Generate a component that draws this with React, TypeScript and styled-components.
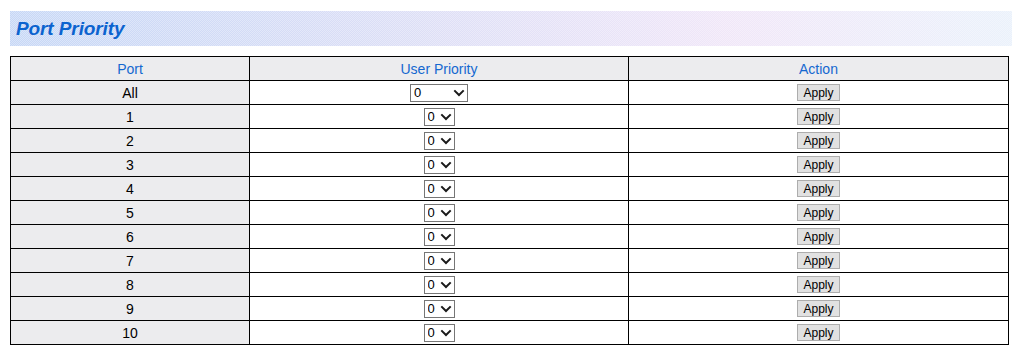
import styled, { createGlobalStyle } from "styled-components";

const GlobalStyle = createGlobalStyle`
    body{
        margin:0;
        background:#ffffff;
        font-family:"Liberation Sans", Arial, sans-serif;
    }
`;

const Page = styled.div`
    padding:11px 7px 0 10px;
`;

const TitleBar = styled.div`
    height:35px;
    display:flex;
    align-items:center;
    padding-left:6px;
    background:
        repeating-conic-gradient(rgba(255,255,255,0.35) 0 25%, rgba(255,255,255,0) 0 50%) 0 0/2px 2px,
        linear-gradient(90deg,#c6d7f6 0%,#dcdef6 40%,#f0e6f8 72%,#eaf1fb 100%);
`;

const Title = styled.h1`
    margin:0;
    font-size:19px;
    font-weight:bold;
    font-style:italic;
    color:#0b63cf;
    letter-spacing:-0.1px;
`;

const Table = styled.table`
    margin-top:10px;
    width:998px;
    border-collapse:collapse;
    table-layout:fixed;
    font-size:14px;
`;

const dither = `
    background:
        repeating-conic-gradient(#e3e3e5 0 25%, #f5f4f6 0 50%) 0 0/2px 2px;
`;

const Head = styled.th`
    ${dither}
    height:23px;
    border:1px solid #000;
    font-weight:normal;
    color:#1468d0;
    text-align:center;
    padding:0;
`;

const Cell = styled.td<{shaded?:boolean}>`
    ${(props)=>props.shaded?dither:"background:#fff;"}
    height:23px;
    border:1px solid #000;
    text-align:center;
    padding:0;
    color:#000;
`;

const SelectBox = styled.span`
    position:relative;
    display:inline-block;
    vertical-align:middle;
    line-height:0;
`;

const Select = styled.select<{wide?:boolean}>`
    appearance:none;
    width:${(props)=>props.wide?"58px":"31px"};
    height:18px;
    font-family:"Liberation Sans", Arial, sans-serif;
    font-size:13px;
    border:1px solid #767676;
    border-radius:0;
    background:#fff;
    color:#000;
    padding:0 0 0 3px;
    margin:0;
`;

const Chevron = styled.svg`
    position:absolute;
    right:3px;
    top:5px;
    width:12px;
    height:8px;
    pointer-events:none;
`;

const ApplyButton = styled.button`
    width:43px;
    height:17px;
    padding:0;
    font-family:"Liberation Sans", Arial, sans-serif;
    font-size:12px;
    color:#000;
    background:#e1e1e1;
    border:1px solid #adadad;
    border-radius:0;
    vertical-align:middle;
`;

const ports=["All","1","2","3","4","5","6","7","8","9","10"];

function App(){
    return(
        <Page>
            <GlobalStyle/>
            <TitleBar>
                <Title>Port Priority</Title>
            </TitleBar>
            <Table>
                <colgroup>
                    <col style={{width:239}}/>
                    <col style={{width:379}}/>
                    <col style={{width:380}}/>
                </colgroup>
                <thead>
                    <tr>
                        <Head>Port</Head>
                        <Head>User Priority</Head>
                        <Head>Action</Head>
                    </tr>
                </thead>
                <tbody>
                    {ports.map((port)=>(
                        <tr key={port}>
                            <Cell shaded>{port}</Cell>
                            <Cell>
                                <SelectBox>
                                    <Select wide={port==="All"} defaultValue="0">
                                        {[0,1,2,3,4,5,6,7].map((p)=>(
                                            <option key={p} value={String(p)}>{p}</option>
                                        ))}
                                    </Select>
                                    <Chevron viewBox="0 0 12 8">
                                        <path d="M1.3 1.4 L6 6 L10.7 1.4" fill="none" stroke="#1a1a1a" strokeWidth="2"/>
                                    </Chevron>
                                </SelectBox>
                            </Cell>
                            <Cell>
                                <ApplyButton>Apply</ApplyButton>
                            </Cell>
                        </tr>
                    ))}
                </tbody>
            </Table>
        </Page>
    )
}

export default App;
